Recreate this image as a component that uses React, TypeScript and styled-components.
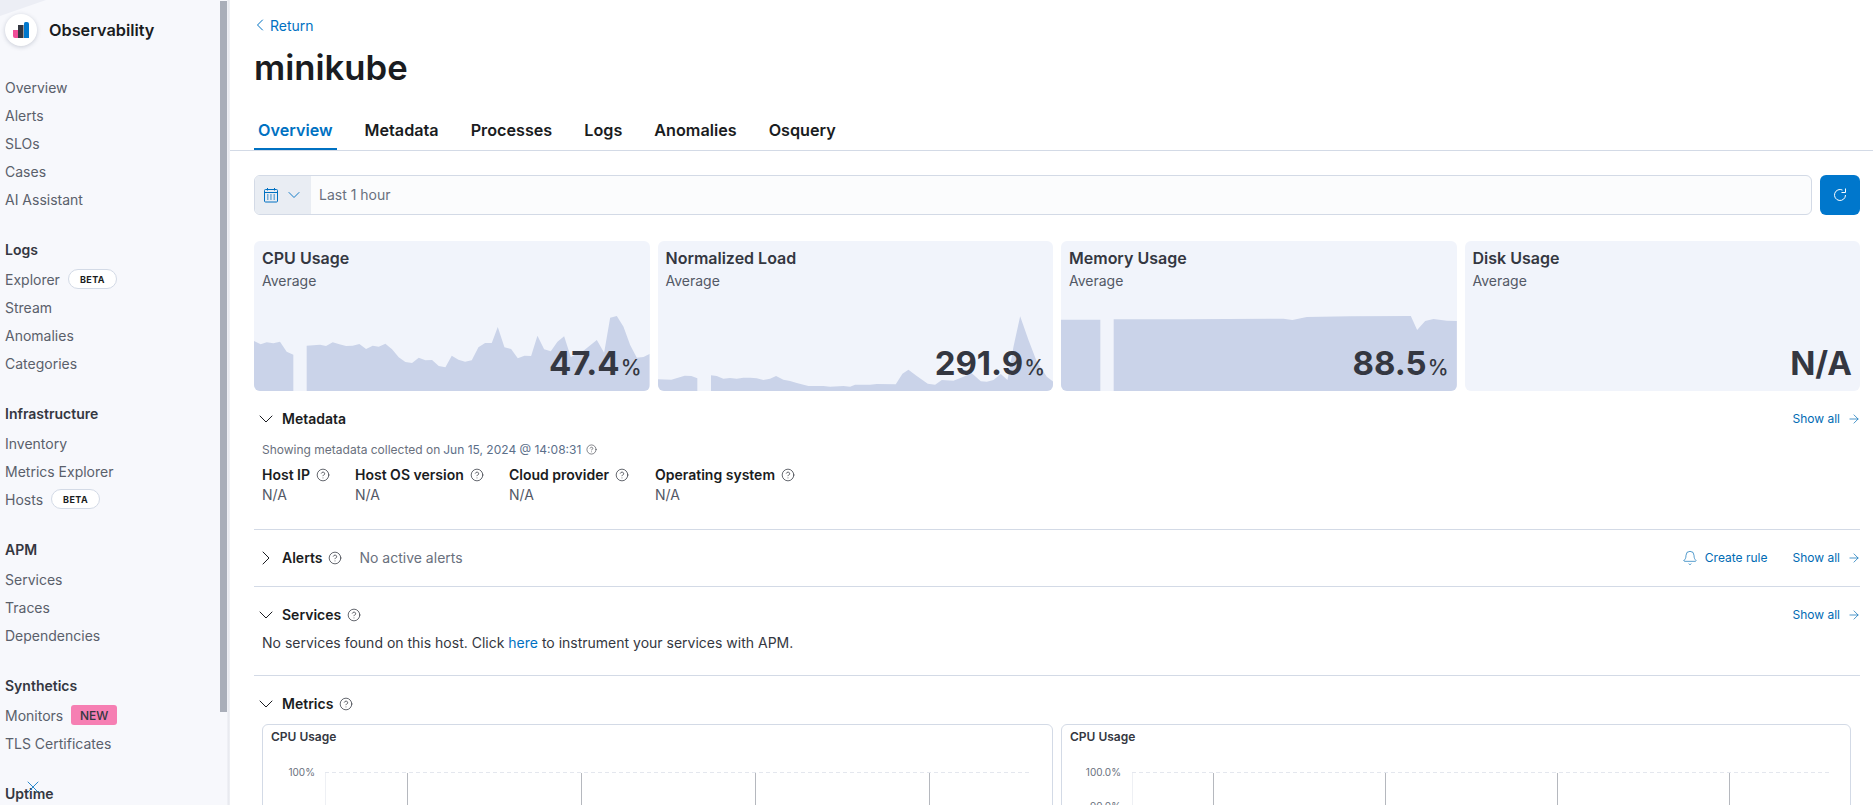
import styled, { createGlobalStyle } from 'styled-components';
import { ArrowRight, Bell, ChevronDown, ChevronLeft, ChevronRight, CircleHelp, X } from 'lucide-react';

const GlobalStyle = createGlobalStyle`
  html, body {
    margin: 0;
    height: 100%;
    overflow: hidden;
    background: #fff;
    font-family: Inter, "Noto Sans", sans-serif;
    font-size: 14px;
    color: #343741;
  }
`;

const Layout = styled.div`
  display: flex;
  height: 805px;
  overflow: hidden;
`;

const Sidebar = styled.aside`
  position: relative;
  flex: 0 0 230px;
  box-sizing: border-box;
  padding: 0 0 0 5px;
  background: linear-gradient(to right, #f7f8fc 227px, #e6e8ee 228px, #f0f1f5 230px);
  overflow: hidden;

  &::before {
    content: '';
    position: absolute;
    top: 0;
    left: 0;
    width: 46px;
    height: 16px;
    background: #eceef5;
    clip-path: polygon(0 0, 100% 0, 0 100%);
  }
`;

const ScrollThumb = styled.div`
  position: absolute;
  top: 1px;
  left: 220px;
  width: 7px;
  height: 711px;
  background: #a9aeb9;
`;

const Brand = styled.div`
  display: flex;
  align-items: center;
  gap: 12px;
  height: 74px;
  padding-bottom: 14px;
  box-sizing: border-box;
`;

const LogoCircle = styled.div`
  position: relative;
  flex: 0 0 32px;
  width: 32px;
  height: 32px;
  border-radius: 50%;
  background: #fff;
  box-shadow: 0 1px 4px rgba(60, 70, 100, 0.25);
  display: flex;
  align-items: center;
  justify-content: center;
`;

const BrandName = styled.span`
  font-size: 16.3px;
  font-weight: 600;
  color: #1a1c21;
`;

const NavGroup = styled.nav`
  margin-bottom: 20px;
`;

const NavHeading = styled.div`
  height: 32px;
  line-height: 32px;
  font-weight: 600;
  color: #343741;
`;

const NavItem = styled.div`
  display: flex;
  align-items: center;
  box-sizing: border-box;
  height: 28px;
  padding-bottom: 2px;
  color: #5a606b;
`;

const BetaBadge = styled.span`
  display: inline-flex;
  align-items: center;
  justify-content: center;
  box-sizing: border-box;
  width: 49px;
  height: 20px;
  margin-left: 8px;
  border: 1px solid #d3dae6;
  border-radius: 10px;
  background: #fff;
  color: #1a1c21;
  font-size: 9px;
  font-weight: 700;
  letter-spacing: 0.4px;
`;

const NewBadge = styled.span`
  display: inline-flex;
  align-items: center;
  justify-content: center;
  width: 46px;
  height: 20px;
  margin-left: 8px;
  border-radius: 3px;
  background: #f67fb3;
  color: #343741;
  font-size: 12px;
  font-weight: 500;
`;

const CloseMark = styled.span`
  position: absolute;
  left: 23px;
  top: 777px;
  display: flex;
  color: #0071c2;
`;

const Main = styled.main`
  flex: 1;
  min-width: 0;
  overflow: hidden;
`;

const PageHeader = styled.header`
  box-sizing: border-box;
  height: 151px;
  padding: 15px 0 0 24px;
  border-bottom: 1px solid #d3dae6;
`;

const BackLink = styled.a`
  display: flex;
  align-items: center;
  height: 20px;
  margin-left: -4px;
  color: #0071c2;
  font-size: 14px;
`;

const PageTitle = styled.h1`
  margin: 10px 0 0;
  height: 44px;
  line-height: 44px;
  font-size: 34.7px;
  font-weight: 600;
  color: #1a1c21;
`;

const TabBar = styled.div`
  display: flex;
  gap: 24px;
  margin-top: 25px;
`;

const Tab = styled.div<{ $active?: boolean }>`
  box-sizing: border-box;
  height: 36px;
  padding: 0 4px;
  line-height: 32px;
  font-size: 16.2px;
  font-weight: 600;
  color: ${(p) => (p.$active ? '#0071c2' : '#1a1c21')};
  border-bottom: 2px solid ${(p) => (p.$active ? '#0071c2' : 'transparent')};
`;

const Body = styled.div`
  padding: 24px 13px 0 24px;
`;

const DateRow = styled.div`
  display: flex;
  gap: 8px;
  height: 40px;
`;

const DateField = styled.div`
  flex: 1;
  display: flex;
  box-sizing: border-box;
  border: 1px solid #d3dae6;
  border-radius: 6px;
  background: #fbfcfd;
  overflow: hidden;
`;

const DatePrepend = styled.div`
  flex: 0 0 56px;
  display: flex;
  align-items: center;
  gap: 5px;
  padding-left: 8px;
  box-sizing: border-box;
  background: #e9edf3;
  color: #0071c2;
`;

const DateText = styled.div`
  display: flex;
  align-items: center;
  padding: 0 0 2px 8px;
  color: #69707d;
  font-size: 14px;
`;

const RefreshButton = styled.button`
  flex: 0 0 40px;
  padding: 0;
  border: 0;
  border-radius: 6px;
  background: #0077cc;
  display: flex;
  align-items: center;
  justify-content: center;
`;

const KpiGrid = styled.div`
  display: grid;
  grid-template-columns: repeat(4, 1fr);
  gap: 8px;
  margin-top: 26px;
`;

const KpiCard = styled.div`
  position: relative;
  height: 150px;
  box-sizing: border-box;
  padding: 7px 8px 8px;
  border-radius: 6px;
  background: #f1f4fb;
  overflow: hidden;
`;

const KpiArea = styled.svg`
  position: absolute;
  inset: 0;
  width: 100%;
  height: 100%;
`;

const KpiTitle = styled.div`
  position: relative;
  line-height: 20px;
  font-size: 16px;
  font-weight: 600;
  color: #343741;
`;

const KpiSub = styled.div`
  position: relative;
  margin-top: 3px;
  line-height: 20px;
  font-size: 14px;
  color: #535966;
`;

const KpiValue = styled.div`
  position: absolute;
  right: 8px;
  bottom: 6px;
  line-height: 44px;
  font-size: 33px;
  font-weight: 700;
  color: #343741;
`;

const KpiUnit = styled.span`
  margin-left: 1px;
  line-height: 1;
  font-size: 21px;
  font-weight: 500;
`;

const Section = styled.section<{ $bottom: number }>`
  padding: 16px 0 ${(p) => p.$bottom}px;
  border-bottom: 1px solid #d3dae6;

  &:last-child {
    border-bottom: 0;
  }
`;

const SectionHead = styled.div`
  display: flex;
  align-items: center;
  height: 24px;
`;

const Toggle = styled.span`
  display: flex;
  width: 28px;
  color: #1a1c21;
`;

const SectionTitle = styled.span`
  padding-bottom: 2px;
  font-weight: 600;
  font-size: 14px;
  color: #1a1c21;
`;

const HelpIcon = styled.span<{ $gap?: number }>`
  display: inline-flex;
  margin-left: ${(p) => p.$gap ?? 6}px;
  color: #343741;
`;

const Muted = styled.span`
  margin-left: 17px;
  padding-bottom: 2px;
  font-size: 14px;
  color: #69707d;
`;

const HeadActions = styled.div`
  margin-left: auto;
  margin-right: -1px;
  display: flex;
  align-items: center;
  gap: 25px;
`;

const ActionLink = styled.a`
  display: flex;
  align-items: center;
  gap: 7px;
  font-size: 12px;
  color: #006bb4;
`;

const ActionLabel = styled.span`
  padding-bottom: 2px;
`;

const SectionBody = styled.div`
  padding-left: 8px;
`;

const CollectedNote = styled.div`
  display: flex;
  align-items: center;
  margin-top: 10px;
  height: 16px;
  font-size: 12px;
  color: #69707d;
`;

const CollectedDate = styled.span`
  margin-left: 3px;
  color: #5c6f8a;
`;

const FieldRow = styled.div`
  display: flex;
  margin-top: 8px;
`;

const Field = styled.div<{ $width: number }>`
  width: ${(p) => p.$width}px;
`;

const FieldLabel = styled.div`
  display: flex;
  align-items: center;
  height: 20px;
  font-size: 14px;
  font-weight: 600;
  color: #1a1c21;
`;

const FieldName = styled.span`
  padding-bottom: 2px;
`;

const FieldValue = styled.div`
  line-height: 20px;
  font-size: 14px;
  color: #535966;
`;

const BodyText = styled.p`
  margin: 6px 0 0;
  line-height: 20px;
  font-size: 14px;
  color: #343741;
`;

const TextLink = styled.a`
  color: #0071c2;
`;

const ChartGrid = styled.div`
  display: grid;
  grid-template-columns: 791px 790px;
  gap: 8px;
  margin-top: 8px;
  margin-left: 8px;
`;

const ChartPanel = styled.div`
  box-sizing: border-box;
  height: 200px;
  border: 1px solid #d3dae6;
  border-radius: 6px;
  background: #fff;
`;

const ChartTitle = styled.div`
  padding: 4px 0 0 8px;
  line-height: 16px;
  font-size: 12px;
  font-weight: 600;
  color: #343741;
`;

const ChartSvg = styled.svg`
  display: block;
  width: 100%;
  height: 120px;

  text {
    font-family: Inter, sans-serif;
    font-size: 10px;
    fill: #69707d;
  }
`;

const HelpGlyph = ({ size = 14 }: { size?: number }) => <CircleHelp size={size} strokeWidth={1.3} />;

const CalendarIcon = () => (
  <svg width="16" height="16" viewBox="0 0 16 16" fill="none" stroke="currentColor" strokeWidth="1">
    <rect x="1.5" y="2.5" width="13" height="12.5" rx="1" />
    <path d="M1.5 5.5h13M4.5 1v2.5M11.5 1v2.5" />
    <path d="M4 8h1.5M7.2 8h1.5M10.5 8h1.5M4 10h1.5M7.2 10h1.5M10.5 10h1.5M4 12h1.5M7.2 12h1.5M10.5 12h1.5" />
  </svg>
);

const RefreshIcon = () => (
  <svg width="14" height="14" viewBox="0 0 14 14" fill="none" stroke="#fff" strokeWidth="1">
    <path d="M9.5 2.1A5.5 5.5 0 1 0 12.5 7" />
    <path d="M12.5 .5v4h-4" />
  </svg>
);

const ObservabilityLogo = () => (
  <svg width="16" height="16" viewBox="0 0 16 16">
    <path d="M0 8h5v8H2a2 2 0 0 1-2-2z" fill="#f04e98" />
    <rect x="5" y="3" width="5.5" height="13" fill="#343741" />
    <path d="M11 1.5a1.5 1.5 0 0 1 1.5-1.5H14a2 2 0 0 1 2 2v14h-5z" fill="#0077cc" />
  </svg>
);

type Pt = [number, number];

const cpuSeries: Pt[][] = [
  [[0, 300], [20, 310], [38, 304], [58, 307], [78, 302], [98, 332], [118, 341]],
  [[158, 314], [198, 311], [216, 315], [236, 304], [256, 310], [276, 315], [296, 314], [316, 309], [336, 324], [356, 314], [374, 317], [394, 308], [414, 325], [434, 349], [454, 363], [474, 366], [494, 350], [514, 358], [534, 357], [554, 375], [574, 379], [593, 344], [613, 356], [633, 362], [653, 358], [673, 319], [693, 306], [713, 306], [731, 258], [751, 319], [771, 324], [791, 352], [811, 344], [831, 345], [850, 284], [870, 325], [890, 331], [910, 302], [930, 286], [950, 348], [988, 329], [1028, 297], [1050, 335], [1068, 230], [1088, 225], [1108, 257], [1128, 312], [1148, 350], [1168, 348], [1186, 339]],
];

const loadSeries: Pt[][] = [
  [[0, 415], [40, 416], [60, 410], [80, 404], [100, 405], [118, 412]],
  [[159, 403], [176, 405], [196, 413], [216, 411], [236, 413], [256, 410], [276, 410], [296, 412], [316, 417], [336, 413], [354, 405], [376, 416], [396, 420], [416, 426], [451, 435], [496, 435], [516, 437], [556, 435], [576, 437], [591, 431], [636, 431], [656, 429], [713, 430], [733, 398], [751, 386], [776, 405], [809, 428], [831, 431], [851, 417], [886, 419], [916, 407], [941, 397], [968, 421], [986, 422], [1006, 417], [1028, 399], [1048, 417], [1066, 317], [1086, 226], [1111, 297], [1136, 362], [1166, 407], [1185, 422]],
];

const memorySeries: Pt[][] = [
  [[0, 236], [118, 236]],
  [[158, 235], [367, 235], [667, 233], [694, 237], [737, 228], [867, 226], [1049, 225], [1068, 267], [1092, 240], [1117, 234], [1157, 239], [1187, 240]],
];

const toPath = (seg: Pt[]) => {
  const line = seg.map(([x, y]) => `${x} ${y}`).join(' L');
  return `M${seg[0][0]} 450 L${line} L${seg[seg.length - 1][0]} 450 Z`;
};

const kpis = [
  { title: 'CPU Usage', value: '47.4', unit: '%', series: cpuSeries },
  { title: 'Normalized Load', value: '291.9', unit: '%', series: loadSeries },
  { title: 'Memory Usage', value: '88.5', unit: '%', series: memorySeries },
  { title: 'Disk Usage', value: 'N/A', unit: '', series: [] as Pt[][] },
];

const fields = [
  { label: 'Host IP', width: 93 },
  { label: 'Host OS version', width: 154 },
  { label: 'Cloud provider', width: 146 },
  { label: 'Operating system', width: 200 },
];

const navGroups = [
  { items: ['Overview', 'Alerts', 'SLOs', 'Cases', 'AI Assistant'] },
  { title: 'Logs', items: ['Explorer', 'Stream', 'Anomalies', 'Categories'] },
  { title: 'Infrastructure', items: ['Inventory', 'Metrics Explorer', 'Hosts'] },
  { title: 'APM', items: ['Services', 'Traces', 'Dependencies'] },
  { title: 'Synthetics', items: ['Monitors', 'TLS Certificates'] },
  { title: 'Uptime', items: [] },
];

const badgeFor = (item: string) => {
  if (item === 'Explorer' || item === 'Hosts') return <BetaBadge>BETA</BetaBadge>;
  if (item === 'Monitors') return <NewBadge>NEW</NewBadge>;
  return null;
};

const ShowAll = () => (
  <ActionLink>
    <ActionLabel>Show all</ActionLabel>
    <ArrowRight size={14} strokeWidth={1.2} />
  </ActionLink>
);

const CpuChart = ({ label, labelX, left, right, lines, second }: { label: string; labelX: number; left: number; right: number; lines: number[]; second?: boolean }) => (
  <ChartSvg>
    <text x={labelX} y={30.5} textAnchor="end">{label}</text>
    {second && <text x={labelX} y={65} textAnchor="end">90.0%</text>}
    <line x1={left} x2={right} y1={27.5} y2={27.5} stroke="#e4e7ee" strokeDasharray="4 3" />
    <line x1={left + 0.5} x2={left + 0.5} y1={28} y2={120} stroke="#eef0f4" />
    {lines.map((x) => (
      <line key={x} x1={x + 0.5} x2={x + 0.5} y1={28} y2={120} stroke="#b5b8be" />
    ))}
  </ChartSvg>
);

const SectionToggle = ({ open = true }: { open?: boolean }) => (
  <Toggle>{open ? <ChevronDown size={24} strokeWidth={1} /> : <ChevronRight size={24} strokeWidth={1} />}</Toggle>
);

export default function App() {
  return (
    <Layout>
      <GlobalStyle />
      <Sidebar>
        <ScrollThumb />
        <Brand>
          <LogoCircle>
            <ObservabilityLogo />
          </LogoCircle>
          <BrandName>Observability</BrandName>
        </Brand>
        {navGroups.map((group, i) => (
          <NavGroup key={i}>
            {group.title && <NavHeading>{group.title}</NavHeading>}
            {group.items.map((item) => (
              <NavItem key={item}>
                {item}
                {badgeFor(item)}
              </NavItem>
            ))}
          </NavGroup>
        ))}
        <CloseMark>
          <X size={20} strokeWidth={1} />
        </CloseMark>
      </Sidebar>
      <Main>
        <PageHeader>
          <BackLink>
            <ChevronLeft size={20} strokeWidth={1.2} />
            Return
          </BackLink>
          <PageTitle>minikube</PageTitle>
          <TabBar>
            <Tab $active>Overview</Tab>
            <Tab>Metadata</Tab>
            <Tab>Processes</Tab>
            <Tab>Logs</Tab>
            <Tab>Anomalies</Tab>
            <Tab>Osquery</Tab>
          </TabBar>
        </PageHeader>
        <Body>
          <DateRow>
            <DateField>
              <DatePrepend>
                <CalendarIcon />
                <ChevronDown size={20} strokeWidth={1.1} />
              </DatePrepend>
              <DateText>Last 1 hour</DateText>
            </DateField>
            <RefreshButton>
              <RefreshIcon />
            </RefreshButton>
          </DateRow>
          <KpiGrid>
            {kpis.map((kpi) => (
              <KpiCard key={kpi.title}>
                <KpiArea viewBox="0 0 1186 450" preserveAspectRatio="none">
                  {kpi.series.map((seg, i) => (
                    <path key={i} d={toPath(seg)} fill="#cad3e9" />
                  ))}
                </KpiArea>
                <KpiTitle>{kpi.title}</KpiTitle>
                <KpiSub>Average</KpiSub>
                <KpiValue>
                  {kpi.value}
                  {kpi.unit && <KpiUnit>{kpi.unit}</KpiUnit>}
                </KpiValue>
              </KpiCard>
            ))}
          </KpiGrid>
          <Section $bottom={24}>
            <SectionHead>
              <SectionToggle />
              <SectionTitle>Metadata</SectionTitle>
              <HeadActions>
                <ShowAll />
              </HeadActions>
            </SectionHead>
            <SectionBody>
              <CollectedNote>
                Showing metadata collected on <CollectedDate>Jun 15, 2024 @ 14:08:31</CollectedDate>
                <HelpIcon $gap={5}><HelpGlyph size={11} /></HelpIcon>
              </CollectedNote>
              <FieldRow>
                {fields.map((field) => (
                  <Field key={field.label} $width={field.width}>
                    <FieldLabel>
                      <FieldName>{field.label}</FieldName>
                      <HelpIcon><HelpGlyph /></HelpIcon>
                    </FieldLabel>
                    <FieldValue>N/A</FieldValue>
                  </Field>
                ))}
              </FieldRow>
            </SectionBody>
          </Section>
          <Section $bottom={16}>
            <SectionHead>
              <SectionToggle open={false} />
              <SectionTitle>Alerts</SectionTitle>
              <HelpIcon><HelpGlyph /></HelpIcon>
              <Muted>No active alerts</Muted>
              <HeadActions>
                <ActionLink>
                  <Bell size={16} strokeWidth={1} />
                  <ActionLabel>Create rule</ActionLabel>
                </ActionLink>
                <ShowAll />
              </HeadActions>
            </SectionHead>
          </Section>
          <Section $bottom={22}>
            <SectionHead>
              <SectionToggle />
              <SectionTitle>Services</SectionTitle>
              <HelpIcon><HelpGlyph /></HelpIcon>
              <HeadActions>
                <ShowAll />
              </HeadActions>
            </SectionHead>
            <SectionBody>
              <BodyText>
                No services found on this host. Click <TextLink>here</TextLink> to instrument your services with APM.
              </BodyText>
            </SectionBody>
          </Section>
          <Section $bottom={0}>
            <SectionHead>
              <SectionToggle />
              <SectionTitle>Metrics</SectionTitle>
              <HelpIcon><HelpGlyph /></HelpIcon>
            </SectionHead>
            <ChartGrid>
              <ChartPanel>
                <ChartTitle>CPU Usage</ChartTitle>
                <CpuChart label="100%" labelX={52} left={62} right={769} lines={[144, 318, 492, 666]} />
              </ChartPanel>
              <ChartPanel>
                <ChartTitle>CPU Usage</ChartTitle>
                <CpuChart label="100.0%" labelX={59} left={70} right={770} lines={[151, 323, 495, 667]} second />
              </ChartPanel>
            </ChartGrid>
          </Section>
        </Body>
      </Main>
    </Layout>
  );
}
